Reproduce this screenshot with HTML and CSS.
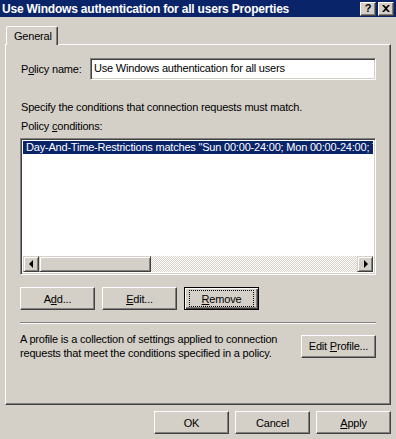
FILE: index.html
```html
<!DOCTYPE html>
<html lang="en">
<head>
    <meta charset="UTF-8">
    <title>Use Windows authentication for all users Properties</title>
    <link rel="stylesheet" href="styles.css">
</head>
<body>
    <div class="window">
        <div class="titlebar">
            <span class="title">Use Windows authentication for all users Properties</span>
            <div class="caption-buttons">
                <span class="cap-btn help">?</span>
                <span class="cap-btn close">
                    <svg width="8" height="7" viewBox="0 0 8 7"><path d="M0 0h2l2 2 2-2h2L5 3.5 8 7H6L4 5 2 7H0l3-3.5z" fill="#000"/></svg>
                </span>
            </div>
        </div>

        <div class="tabstrip">
            <div class="tab">General</div>
        </div>

        <div class="panel">
            <div class="name-row">
                <label class="name-label">P<u>o</u>licy name:</label>
                <div class="field">Use Windows authentication for all users</div>
            </div>

            <p class="hint">Specify the conditions that connection requests must match.</p>
            <p class="cond-label">Policy <u>c</u>onditions:</p>

            <div class="listbox">
                <div class="list-items">
                    <div class="item selected">Day-And-Time-Restrictions matches "Sun 00:00-24:00; Mon 00:00-24:00; T</div>
                </div>
                <div class="hscroll">
                    <span class="sb-btn"><span class="arrow left"></span></span>
                    <span class="sb-thumb"></span>
                    <span class="sb-track"></span>
                    <span class="sb-btn"><span class="arrow right"></span></span>
                </div>
            </div>

            <div class="cond-buttons">
                <button class="btn"><span>A<u>d</u>d...</span></button>
                <button class="btn"><span><u>E</u>dit...</span></button>
                <button class="btn default"><span class="focus"><span><u>R</u>emove</span></span></button>
            </div>

            <div class="separator"></div>

            <div class="profile-row">
                <p class="profile-text">A profile is a collection of settings applied to connection requests that meet the conditions specified in a policy.</p>
                <button class="btn"><span>Edit <u>P</u>rofile...</span></button>
            </div>
        </div>

        <div class="footer">
            <button class="btn"><span>OK</span></button>
            <button class="btn"><span>Cancel</span></button>
            <button class="btn"><span><u>A</u>pply</span></button>
        </div>
    </div>
</body>
</html>
```

FILE: styles.css
```css
* {
    margin: 0;
    padding: 0;
    box-sizing: border-box;
}

body {
    font-family: 'Liberation Sans', Arial, sans-serif;
    font-size: 11px;
    letter-spacing: -0.2px;
    color: #000;
    background-color: #d4d0c8;
    width: 396px;
    height: 439px;
    overflow: hidden;
}

.window {
    width: 396px;
    height: 439px;
    background-color: #d4d0c8;
}

/* title bar */
.titlebar {
    height: 17px;
    background-color: #0a246a;
    display: flex;
    align-items: center;
    justify-content: space-between;
    padding: 0 2px 0 2px;
}

.title {
    color: #fff;
    font-weight: 700;
    font-size: 12px;
    letter-spacing: -0.2px;
    white-space: nowrap;
}

.caption-buttons {
    display: flex;
    gap: 2px;
}

.cap-btn {
    width: 16px;
    height: 14px;
    background-color: #d4d0c8;
    border: 1px solid;
    border-color: #fff #404040 #404040 #fff;
    box-shadow: inset -1px -1px #808080;
    display: flex;
    align-items: center;
    justify-content: center;
    font-weight: 700;
    font-size: 11px;
    line-height: 1;
}

/* tabs */
.tabstrip {
    height: 27px;
    padding: 9px 0 0 6px;
    display: flex;
    align-items: flex-end;
}

.tab {
    position: relative;
    z-index: 1;
    width: 52px;
    height: 19px;
    margin-bottom: -1px;
    background-color: #d4d0c8;
    border-top: 1px solid #fff;
    border-left: 1px solid #fff;
    border-right: 1px solid #404040;
    border-top-left-radius: 2px;
    border-top-right-radius: 2px;
    box-shadow: inset -1px 0 #808080;
    padding: 3px 0 0 7px;
}

/* property page */
.panel {
    margin: 0 5px;
    height: 361px;
    border-top: 1px solid #fff;
    border-left: 1px solid #fff;
    border-right: 1px solid #404040;
    border-bottom: 1px solid #404040;
    box-shadow: inset -1px -1px #808080;
    padding: 13px 14px 0 14px;
}

.name-row {
    display: flex;
    align-items: center;
    height: 22px;
}

.name-label {
    width: 70px;
    padding-left: 1px;
}

.field {
    flex: 1;
    height: 22px;
    background-color: #fff;
    border: 1px solid;
    border-color: #808080 #fff #fff #808080;
    box-shadow: inset 1px 1px #404040, inset -1px -1px #d4d0c8;
    padding: 3px 3px 0 3px;
    white-space: nowrap;
    overflow: hidden;
}

.hint {
    margin-top: 20px;
    line-height: 14px;
    padding-left: 1px;
}

.cond-label {
    margin-top: 5px;
    line-height: 14px;
    padding-left: 1px;
}

.listbox {
    margin-top: 5px;
    height: 137px;
    background-color: #fff;
    border: 1px solid;
    border-color: #808080 #fff #fff #808080;
    box-shadow: inset 1px 1px #404040, inset -1px -1px #d4d0c8;
    padding: 2px;
    display: flex;
    flex-direction: column;
}

.list-items {
    flex: 1;
    overflow: hidden;
}

.item {
    height: 13px;
    line-height: 13px;
    padding-left: 3px;
    white-space: nowrap;
    overflow: hidden;
}

.item.selected {
    background-color: #0a246a;
    color: #fff;
}

.hscroll {
    height: 16px;
    display: flex;
}

.sb-btn,
.sb-thumb {
    background-color: #d4d0c8;
    border: 1px solid;
    border-color: #d4d0c8 #404040 #404040 #d4d0c8;
    box-shadow: inset 1px 1px #fff, inset -1px -1px #808080;
}

.sb-btn {
    width: 16px;
    height: 16px;
    display: flex;
    align-items: center;
    justify-content: center;
}

.sb-thumb {
    width: 112px;
    height: 16px;
}

.sb-track {
    flex: 1;
    height: 16px;
    background: repeating-conic-gradient(#fff 0 25%, #d4d0c8 0 50%) 0 0 / 2px 2px;
}

.arrow {
    width: 0;
    height: 0;
    border-top: 4px solid transparent;
    border-bottom: 4px solid transparent;
}

.arrow.left {
    border-right: 4px solid #000;
    margin-right: 1px;
}

.arrow.right {
    border-left: 4px solid #000;
    margin-left: 1px;
}

/* buttons */
.btn {
    width: 75px;
    height: 23px;
    font-family: 'Liberation Sans', Arial, sans-serif;
    font-size: 11px;
    letter-spacing: -0.2px;
    color: #000;
    background-color: #d4d0c8;
    border: 1px solid;
    border-color: #fff #404040 #404040 #fff;
    box-shadow: inset -1px -1px #808080;
    display: flex;
    align-items: center;
    justify-content: center;
    white-space: nowrap;
}

.btn.default {
    border: 1px solid #000;
    box-shadow: inset 1px 1px #fff, inset -1px -1px #404040, inset -2px -2px #808080;
}

.focus {
    display: flex;
    align-items: center;
    justify-content: center;
    width: 63px;
    height: 15px;
    outline: 1px dotted #000;
}

.cond-buttons {
    margin-top: 12px;
    display: flex;
    gap: 7px;
}

.separator {
    margin-top: 12px;
    height: 2px;
    border-top: 1px solid #808080;
    border-bottom: 1px solid #fff;
}

.profile-row {
    margin-top: 8px;
    display: flex;
    justify-content: space-between;
    align-items: center;
}

.profile-text {
    width: 270px;
    line-height: 14px;
}

.footer {
    margin-top: 6px;
    padding-right: 5px;
    display: flex;
    justify-content: flex-end;
    gap: 6px;
}
```
